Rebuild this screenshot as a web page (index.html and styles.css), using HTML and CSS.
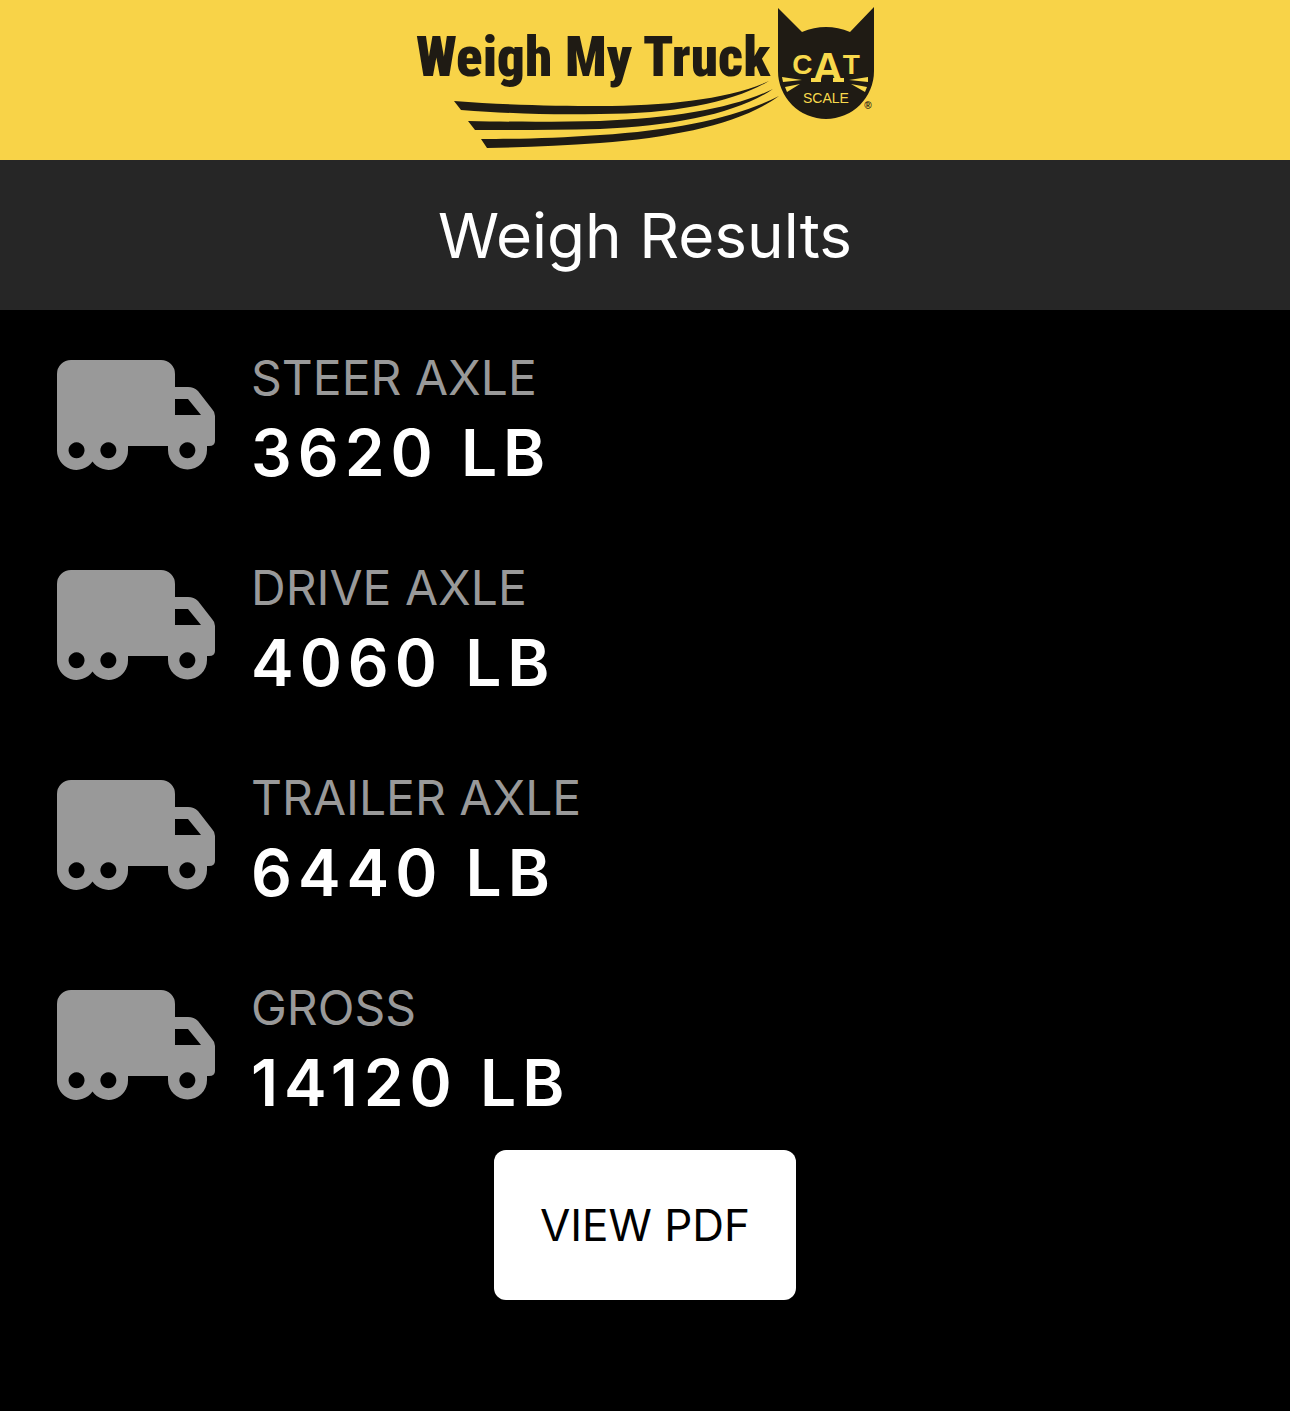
FILE: index.html
```html
<!DOCTYPE html>
<html lang="en">
<head>
<meta charset="utf-8">
<meta name="viewport" content="width=device-width, initial-scale=1">
<title>Weigh Results</title>
<link rel="stylesheet" href="styles.css">
</head>
<body>
<svg class="defs" aria-hidden="true">
  <symbol id="truck" viewBox="0 0 158 110">
    <path fill-rule="evenodd" d="M14 0H104A14 14 0 0 1 118 14V27H131Q137 27 141 31L155 49Q158 52 158 56V81Q158 86 152 86H150V90A19.500 19.500 0 0 1 111 90V86H71V90A19.500 19.500 0 0 1 35.500 101.500A19.500 19.500 0 0 1 0 90V14A14 14 0 0 1 14 0ZM118 39V55H144L131 39ZM19.500 82.300a8 8 0 1 0 .1 0ZM51.300 82.300a8 8 0 1 0 .1 0ZM130.300 82.300a8 8 0 1 0 .1 0Z"/>
  </symbol>
</svg>
<header class="brand">
  <svg class="logo" viewBox="0 0 458 140" role="img" aria-label="Weigh My Truck, CAT Scale">
    <text class="logo-name" x="0" y="68">Weigh My Truck</text>
    <path d="M38 93C90 97 140 98 184 98C250 98 314 91 353 73C318 94 260 106 184 106C140 107 100 106 45 102Z"/>
    <path d="M52 113C100 114 140 114 184 113C260 110 318 100 357 81C322 105 260 118 184 121C140 122 100 122 59 122Z"/>
    <path d="M65 131C110 131 140 130 184 127C262 122 322 109 363 88C326 115 262 129 184 135C145 138 110 139 71 140Z"/>
    <path d="M362 0L386 24Q410 14 434 24L458 -1V63A48 48 0 0 1 362 63Z"/>
    <g class="logo-cat">
      <path d="M366 69L367 74L386 72ZM369 79L371 84L384 76ZM452 69L452 74L433 72ZM451 79L449 84L435 76ZM395 70H405V74H395ZM417 70H428V74H417Z"/>
      <text class="logo-cat-side" x="410" y="66">C<tspan class="logo-cat-mid" dy="8">A</tspan><tspan dy="-8">T</tspan></text>
      <text class="logo-cat-scale" x="410" y="95">SCALE</text>
    </g>
    <text class="logo-mark" x="452" y="101">®</text>
  </svg>
</header>
<h1 class="title">Weigh Results</h1>
<main class="results">
  <dl class="axles">
    <div class="axle">
      <svg class="axle-icon" aria-hidden="true"><use href="#truck"/></svg>
      <div><dt class="axle-name">STEER AXLE</dt><dd class="axle-weight">3620 LB</dd></div>
    </div>
    <div class="axle">
      <svg class="axle-icon" aria-hidden="true"><use href="#truck"/></svg>
      <div><dt class="axle-name">DRIVE AXLE</dt><dd class="axle-weight">4060 LB</dd></div>
    </div>
    <div class="axle">
      <svg class="axle-icon" aria-hidden="true"><use href="#truck"/></svg>
      <div><dt class="axle-name">TRAILER AXLE</dt><dd class="axle-weight">6440 LB</dd></div>
    </div>
    <div class="axle">
      <svg class="axle-icon" aria-hidden="true"><use href="#truck"/></svg>
      <div><dt class="axle-name">GROSS</dt><dd class="axle-weight">14120 LB</dd></div>
    </div>
  </dl>
  <button class="pdf" type="button">VIEW PDF</button>
</main>
</body>
</html>
```
FILE: styles.css
```css
* {
  box-sizing: border-box;
}

body {
  margin: 0;
  min-height: 100vh;
  background: #000;
  color: #fff;
  font-family: Inter, "Liberation Sans", sans-serif;
}

.defs {
  display: none;
}

.brand {
  display: flex;
  justify-content: center;
  padding: 8px 0 12px;
  background: #f8d348;
}

.logo {
  width: 458px;
  height: 140px;
  overflow: visible;
  fill: #1f1b14;
}

.logo-name {
  font: 900 55px "Roboto Condensed", Roboto, sans-serif;
}

.logo-cat {
  fill: #f8d94c;
}

.logo-cat-side {
  font: bold 28px "Liberation Sans", sans-serif;
  text-anchor: middle;
}

.logo-cat-mid {
  font-size: 42px;
}

.logo-cat-scale {
  font: 14px "Liberation Sans", sans-serif;
  text-anchor: middle;
}

.logo-mark {
  font: bold 10px "Liberation Sans", sans-serif;
  text-anchor: middle;
}

.title {
  margin: 0;
  padding: 36px 0 34px;
  background: #262626;
  font-size: 62px;
  font-weight: 400;
  line-height: 80px;
  text-align: center;
}

.results {
  padding: 30px 57px;
}

.axles {
  display: grid;
  gap: 60px;
  margin: 0 0 30px;
}

.axle {
  display: flex;
  align-items: center;
  gap: 36px;
}

.axle-icon {
  flex: none;
  width: 158px;
  height: 110px;
  fill: #999;
}

.axle-name {
  color: #999;
  font-size: 48px;
  line-height: 75px;
}

.axle-weight {
  margin: 0;
  font-size: 64px;
  font-weight: 600;
  line-height: 75px;
  letter-spacing: 6px;
}

.pdf {
  display: block;
  margin: 0 auto;
  padding: 45px 46px;
  border: 0;
  border-radius: 12px;
  background: #fff;
  color: #000;
  font: 400 44px/60px Inter, "Liberation Sans", sans-serif;
}
```
